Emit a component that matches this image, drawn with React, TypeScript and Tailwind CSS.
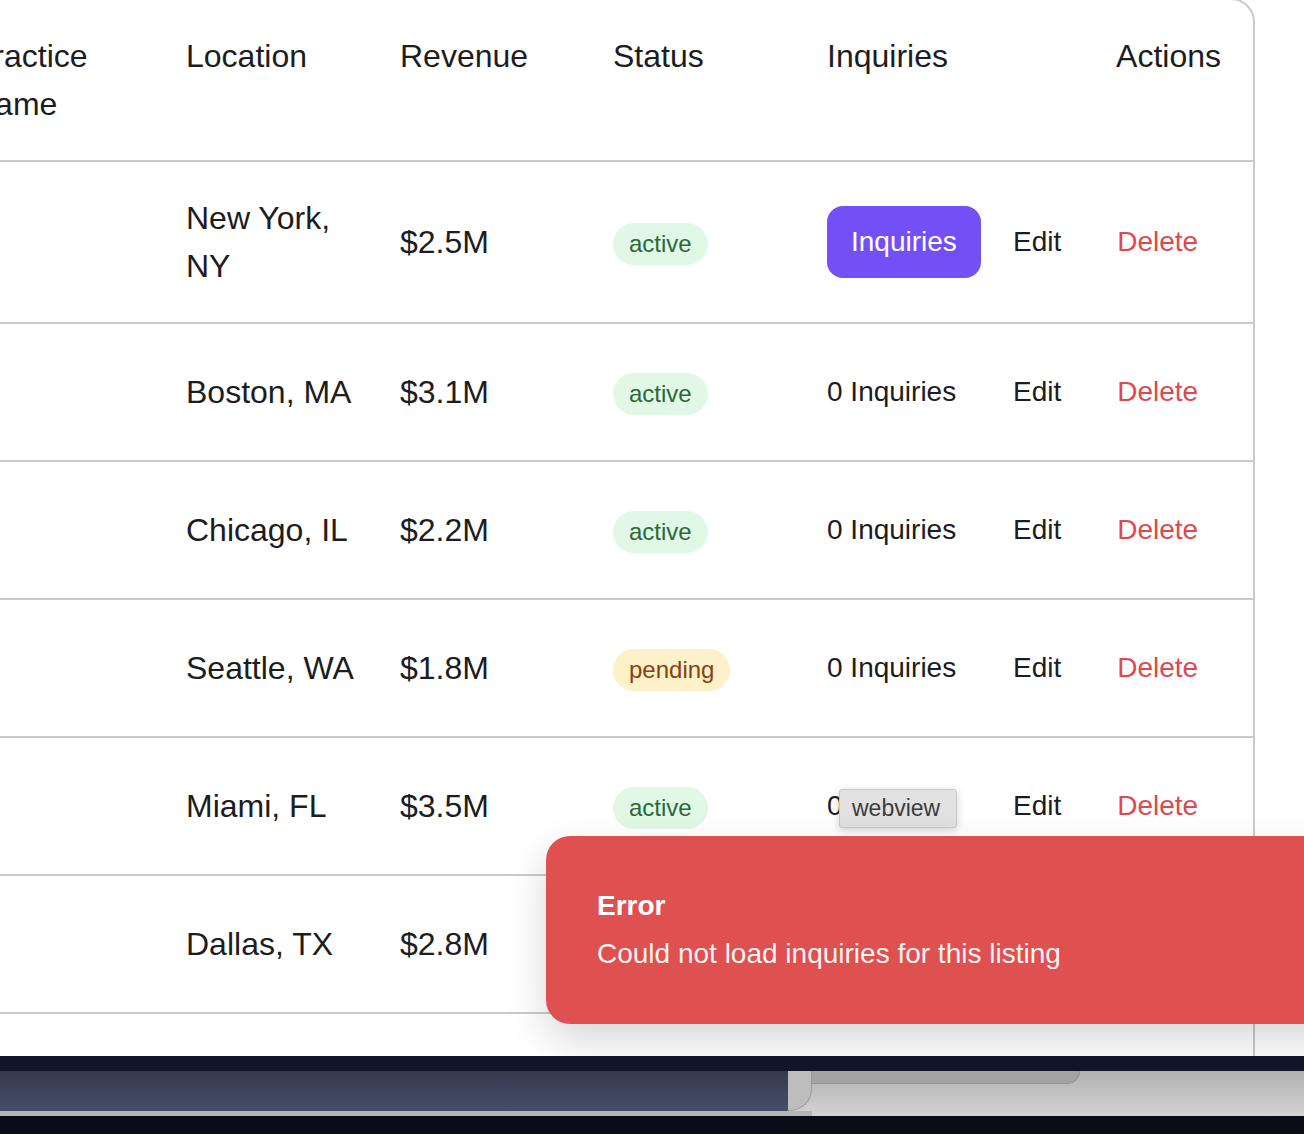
import React from "react";

type Row = {
  loc: string;
  rev: string;
  status: "active" | "pending";
  primary?: boolean;
};

const rows: Row[] = [
  { loc: "New York, NY", rev: "$2.5M", status: "active", primary: true },
  { loc: "Boston, MA", rev: "$3.1M", status: "active" },
  { loc: "Chicago, IL", rev: "$2.2M", status: "active" },
  { loc: "Seattle, WA", rev: "$1.8M", status: "pending" },
  { loc: "Miami, FL", rev: "$3.5M", status: "active" },
  { loc: "Dallas, TX", rev: "$2.8M", status: "active" },
  { loc: "Denver, CO", rev: "$2.1M", status: "active" },
];

const grid =
  "grid grid-cols-[214px_214px_213px_214px_178px_1fr] items-center pl-[23px] border-b-2 border-[#c9c9ce]";

function Badge({ status }: { status: Row["status"] }) {
  if (status === "pending") {
    return (
      <span className="mt-1 block rounded-full bg-[#fcf1c8] px-4 py-[5px] text-[24px] leading-[32px] text-[#8a3f13]">
        pending
      </span>
    );
  }
  return (
    <span className="mt-1 block rounded-full bg-[#e2f8e6] px-4 py-[5px] text-[24px] leading-[32px] text-[#2a6838]">
      active
    </span>
  );
}

export default function App() {
  return (
    <div className="flex h-[1134px] w-[1304px] flex-col overflow-hidden bg-white font-['Liberation_Sans',Arial,sans-serif] text-[#1c1c21]">
      <div className="relative h-[1056px] shrink-0 overflow-hidden bg-white">
        <div className="ml-[-77px] mt-[-2px] w-[1332px] rounded-[24px] border-2 border-[#c9c9ce] bg-white">
          {/* header */}
          <div className={grid}>
            <div className="px-6 py-8 text-[32px] leading-[48px]">Practice Name</div>
            <div className="pl-6 pr-4 py-8 text-[32px] leading-[48px] self-start">Location</div>
            <div className="px-6 py-8 text-[32px] leading-[48px] self-start">Revenue</div>
            <div className="px-6 py-8 text-[32px] leading-[48px] self-start">Status</div>
            <div className="pl-6 py-8 text-[32px] leading-[48px] self-start whitespace-nowrap">Inquiries</div>
            <div className="pl-2 pr-8 py-8 text-right text-[32px] leading-[48px] self-start">Actions</div>
          </div>
          {rows.map((r, i) => (
            <div key={i} className={grid}>
              <div className="px-6 py-8" />
              <div className="pl-6 pr-4 py-8 text-[32px] leading-[48px]">{r.loc}</div>
              <div className="px-6 py-8 text-[32px] leading-[48px]">{r.rev}</div>
              <div className="flex items-center px-6 py-8">
                <Badge status={r.status} />
              </div>
              <div className="pl-6 py-8 whitespace-nowrap">
                {r.primary ? (
                  <button className="rounded-[16px] bg-[#7350f5] px-6 py-4 text-[28px] leading-[40px] text-white">
                    Inquiries
                  </button>
                ) : (
                  <span className="text-[28px] leading-[40px]">0 Inquiries</span>
                )}
              </div>
              <div className="flex gap-2 pl-2 pr-8 py-8">
                <button className="px-6 py-4 text-[28px] leading-[40px] text-[#1c1c21]">Edit</button>
                <button className="px-6 py-4 text-[28px] leading-[40px] text-[#e0484d]">Delete</button>
              </div>
            </div>
          ))}
        </div>

        {/* native tooltip */}
        <div className="absolute left-[839px] top-[789px] h-[39px] w-[118px] rounded-[3px] border border-[#c9c9c9] bg-[#e1e1e1] pl-[12px] text-[23px] leading-[37px] text-[#3b3b3b] shadow-[0_2px_8px_rgba(0,0,0,0.18)]">
          webview
        </div>

        {/* error toast */}
        <div className="absolute left-[546px] top-[836px] h-[188px] w-[840px] rounded-[24px] bg-[#df5151] pl-[51px] pt-[50px] shadow-[0_16px_40px_rgba(0,0,0,0.16)]">
          <div className="text-[28px] font-bold leading-[40px] text-white">Error</div>
          <div className="mt-2 text-[28px] leading-[40px] text-white/95">
            Could not load inquiries for this listing
          </div>
        </div>
      </div>

      {/* bottom window chrome */}
      <div className="flex h-[78px] shrink-0 flex-col bg-[#0a0d18]">
        <div className="h-[15px] bg-[#10162a]" />
        <div className="flex h-[45px] bg-gradient-to-b from-[#b0b0b0] to-[#d4d4d4]">
          <div className="flex w-[812px] flex-col">
            <div className="flex h-[40px]">
              <div className="w-[788px] bg-gradient-to-b from-[#353b4e] to-[#454d68]" />
              <div className="flex-1 rounded-br-[22px] border-b border-r border-[#9c9c9c] bg-[#bdbdbd]" />
            </div>
            <div className="flex-1 bg-[#b5b5b5]" />
          </div>
          <div className="flex-1">
            <div className="h-[13px] w-[268px] rounded-br-[16px] border-b border-r border-[#959595] bg-[#a3a3a3]" />
          </div>
        </div>
        <div className="flex-1 bg-[#0a0d18]" />
      </div>
    </div>
  );
}
